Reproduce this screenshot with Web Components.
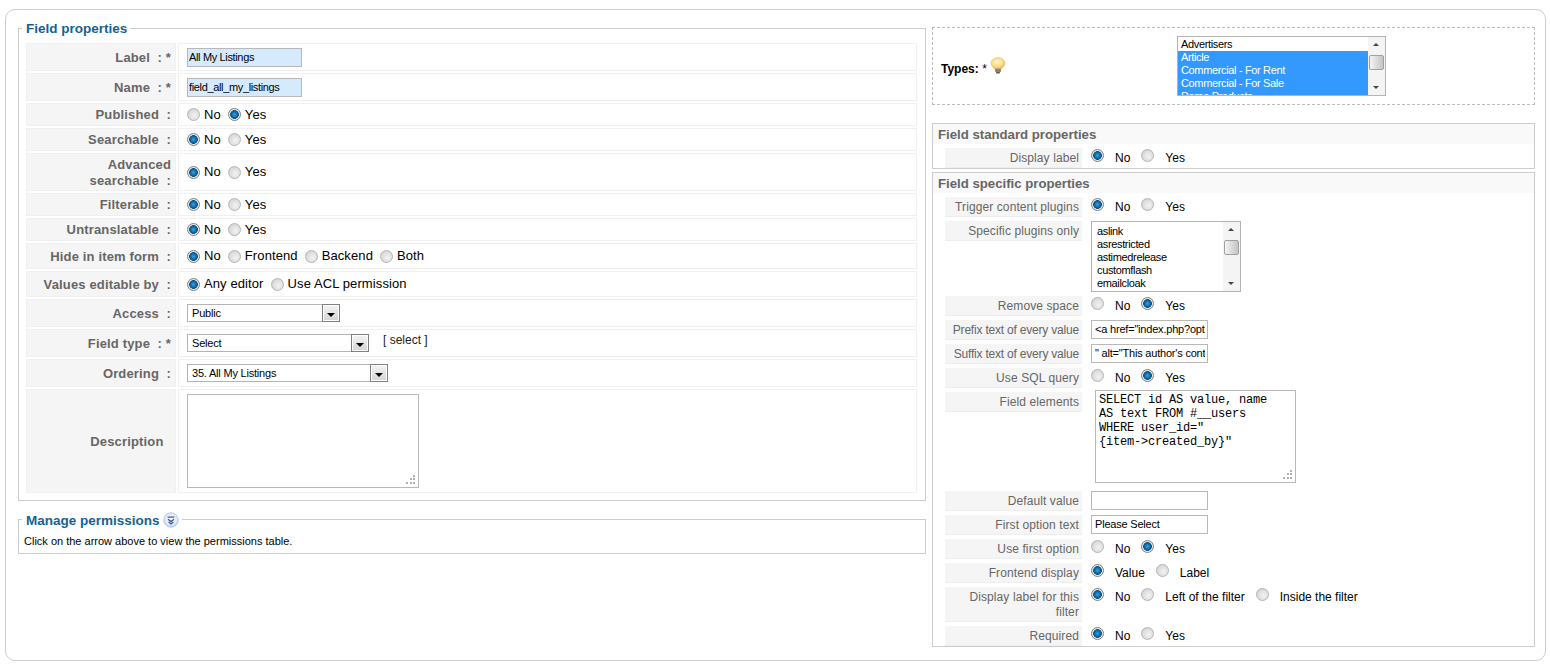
<!DOCTYPE html>
<html>
<head>
<meta charset="utf-8">
<title>Field properties</title>
<style>
    html, body { margin: 0; background: #fff; }
    body { font-family: "Liberation Sans", Arial, sans-serif; color: #000; }
</style>
</head>
<body>
<admin-panel>
    <div slot="left">
        <field-set legend="Field properties">
            <form-table>
                <field-row label="Label  : *" style="--h:28px"><text-box value="All My Listings" width="115" tint></text-box></field-row>
                <field-row label="Name  : *" style="--h:28px"><text-box value="field_all_my_listings" width="115" tint></text-box></field-row>
                <field-row label="Published  :" style="--h:23px"><radio-set options="No,Yes" checked="1"></radio-set></field-row>
                <field-row label="Searchable  :" style="--h:23px"><radio-set options="No,Yes" checked="0"></radio-set></field-row>
                <field-row label="Advanced&#10;searchable  :" style="--h:38px"><radio-set options="No,Yes" checked="0"></radio-set></field-row>
                <field-row label="Filterable  :" style="--h:23px"><radio-set options="No,Yes" checked="0"></radio-set></field-row>
                <field-row label="Untranslatable  :" style="--h:23px"><radio-set options="No,Yes" checked="0"></radio-set></field-row>
                <field-row label="Hide in item form  :" style="--h:26px"><radio-set options="No,Frontend,Backend,Both" checked="0"></radio-set></field-row>
                <field-row label="Values editable by  :" style="--h:26px"><radio-set options="Any editor,Use ACL permission" checked="0"></radio-set></field-row>
                <field-row label="Access  :" style="--h:28px"><drop-select value="Public" width="153"></drop-select></field-row>
                <field-row label="Field type  : *" style="--h:28px"><drop-select value="Select" width="182"></drop-select><span class="type-note">[ select ]</span></field-row>
                <field-row label="Ordering  :" style="--h:28px"><drop-select value="35. All My Listings" width="201"></drop-select></field-row>
                <field-row label="Description  " style="--h:104px"><text-area width="232" height="94"></text-area></field-row>
            </form-table>
        </field-set>
        <field-set legend="Manage permissions" collapsible class="perm">
            <perm-note>Click on the arrow above to view the permissions table.</perm-note>
        </field-set>
    </div>
    <div slot="right">
        <types-box>
            <list-box width="209" height="60" pad="3" top="1">
                <list-opt>Advertisers</list-opt>
                <list-opt selected>Article</list-opt>
                <list-opt selected>Commercial - For Rent</list-opt>
                <list-opt selected>Commercial - For Sale</list-opt>
                <list-opt selected>Demo Products</list-opt>
            </list-box>
        </types-box>
        <prop-box title="Field standard properties" class="std">
            <prop-row label="Display label"><radio-set small options="No,Yes" checked="0"></radio-set></prop-row>
        </prop-box>
        <prop-box title="Field specific properties">
            <prop-row label="Trigger content plugins"><radio-set small options="No,Yes" checked="0"></radio-set></prop-row>
            <prop-row label="Specific plugins only">
                <list-box width="150" height="71" pad="5" top="3">
                    <list-opt>aslink</list-opt>
                    <list-opt>asrestricted</list-opt>
                    <list-opt>astimedrelease</list-opt>
                    <list-opt>customflash</list-opt>
                    <list-opt>emailcloak</list-opt>
                </list-box>
            </prop-row>
            <prop-row label="Remove space"><radio-set small options="No,Yes" checked="1"></radio-set></prop-row>
            <prop-row label="Prefix text of every value" tight><text-box value="&lt;a href=&quot;index.php?option=com_flexicontent" width="117"></text-box></prop-row>
            <prop-row label="Suffix text of every value" tight><text-box value="&quot; alt=&quot;This author's content&quot;" width="117"></text-box></prop-row>
            <prop-row label="Use SQL query"><radio-set small options="No,Yes" checked="1"></radio-set></prop-row>
            <prop-row label="Field elements" flush>
                <text-area width="201" height="93" mono>SELECT id AS value, name
AS text FROM #__users
WHERE user_id="
{item-&gt;created_by}"</text-area>
            </prop-row>
            <prop-row label="Default value"><text-box value="" width="117"></text-box></prop-row>
            <prop-row label="First option text"><text-box value="Please Select" width="117"></text-box></prop-row>
            <prop-row label="Use first option"><radio-set small options="No,Yes" checked="1"></radio-set></prop-row>
            <prop-row label="Frontend display"><radio-set small options="Value,Label" checked="0"></radio-set></prop-row>
            <prop-row label="Display label for this&#10;filter"><radio-set small options="No,Left of the filter,Inside the filter" checked="0"></radio-set></prop-row>
            <prop-row label="Required"><radio-set small options="No,Yes" checked="0"></radio-set></prop-row>
        </prop-box>
    </div>
</admin-panel>

<script>
(function(){
    // Small helper, every element here has the same open shadow + style setup
    function shadow(el, html){
        el.attachShadow({mode: 'open'});
        el.shadowRoot.innerHTML = html;
    }

    function esc(str){
        return String(str).replace(/&/g, '&amp;').replace(/</g, '&lt;').replace(/"/g, '&quot;');
    }

    class AdminPanel extends HTMLElement {
        connectedCallback(){
            shadow(this, `
                <style>
                    :host { display: block; margin: 9px 4px 0 5px; }
                    .wrap {
                        display: grid;
                        grid-template-columns: 908px 603px;
                        column-gap: 6px;
                        align-items: start;
                        box-sizing: border-box;
                        height: 652px;
                        padding: 10px 0 0 12px;
                        border: 1px solid #ccc;
                        border-radius: 10px;
                    }
                    .right { padding-top: 7px; }
                </style>
                <div class="wrap">
                    <div class="left"><slot name="left"></slot></div>
                    <div class="right"><slot name="right"></slot></div>
                </div>
            `);
        }
    }

    class FieldSet extends HTMLElement {
        connectedCallback(){
            const icon = this.hasAttribute('collapsible') ? `
                <svg width="16" height="16" viewBox="0 0 16 16">
                    <defs><radialGradient id="g" cx="50%" cy="45%" r="55%">
                        <stop offset="0" stop-color="#fafcff"/><stop offset="0.7" stop-color="#e3ebf8"/><stop offset="1" stop-color="#b9c8e6"/>
                    </radialGradient></defs>
                    <circle cx="8" cy="8" r="7.2" fill="url(#g)" stroke="#b4c4e2" stroke-width="0.9"/>
                    <path d="M4.6 5.2h6.800M5 7.200l3 2.400 3-2.400M5.600 10l2.400 2 2.400-2" fill="none" stroke="#3a5f9e" stroke-width="1.300"/>
                </svg>` : '';
            const perm = this.classList.contains('perm');
            shadow(this, `
                <style>
                    :host { display: block; margin-top: ${perm ? '10px' : '0'}; }
                    fieldset {
                        margin: 0;
                        padding: ${perm ? '6px 5px 5px 5px' : '7px 7px 7px 7px'};
                        border: 1px solid #ccc;
                        min-width: 0;
                    }
                    legend {
                        display: flex;
                        align-items: center;
                        gap: 3px;
                        margin-left: ${perm ? '-2px' : '-4px'};
                        padding: 1px 3px 0 4px;
                        font: bold 13.5px/15px "Liberation Sans", Arial, sans-serif;
                        color: #146295;
                    }
                </style>
                <fieldset>
                    <legend>${esc(this.getAttribute('legend'))}${icon}</legend>
                    <slot></slot>
                </fieldset>
            `);
        }
    }

    class FormTable extends HTMLElement {
        connectedCallback(){
            shadow(this, `
                <style>
                    :host { display: flex; flex-direction: column; gap: 2px; }
                </style>
                <slot></slot>
            `);
        }
    }

    class FieldRow extends HTMLElement {
        connectedCallback(){
            shadow(this, `
                <style>
                    :host {
                        display: grid;
                        grid-template-columns: 150px 739px;
                        column-gap: 2px;
                        height: var(--h, 24px);
                    }
                    .label {
                        display: flex;
                        align-items: center;
                        justify-content: flex-end;
                        box-sizing: border-box;
                        padding: 1px 4px 0 0;
                        background: #f5f5f5;
                        border: 1px solid #f0f0f0;
                        font: bold 13px/16px "Liberation Sans", Arial, sans-serif;
                        letter-spacing: 0.15px;
                        color: #666;
                        text-align: right;
                        white-space: pre;
                    }
                    .value {
                        display: flex;
                        align-items: center;
                        box-sizing: border-box;
                        padding-left: 8px;
                        border: 1px solid #f0f0f0;
                    }
                    ::slotted(.type-note) {
                        align-self: flex-start;
                        margin: 2px 0 0 14px;
                        font: 12px/16px "Liberation Sans", Arial, sans-serif;
                        color: #222;
                    }
                </style>
                <div class="label">${esc(this.getAttribute('label'))}</div>
                <div class="value"><slot></slot></div>
            `);
        }
    }

    class RadioSet extends HTMLElement {
        connectedCallback(){
            const small = this.hasAttribute('small');
            const checked = Number(this.getAttribute('checked'));
            const items = this.getAttribute('options').split(',').map((opt, i) => `
                <span class="item"><radio-dot ${i === checked ? 'on' : ''}></radio-dot><span class="txt">${esc(opt)}</span></span>
            `).join('');
            shadow(this, `
                <style>
                    :host {
                        display: flex;
                        align-items: ${small ? 'flex-start' : 'center'};
                        gap: ${small ? '11px' : '7px'};
                        font: ${small ? '12px/20px' : '13px/16px'} "Liberation Sans", Arial, sans-serif;
                        letter-spacing: ${small ? '0' : '0.1px'};
                        color: #000;
                    }
                    .item { display: flex; align-items: ${small ? 'flex-start' : 'center'}; gap: ${small ? '11px' : '4px'}; }
                    radio-dot { margin-top: ${small ? '1px' : '0'}; }
                </style>
                ${items}
            `);
        }
    }

    class RadioDot extends HTMLElement {
        connectedCallback(){
            shadow(this, `
                <style>
                    :host {
                        display: block;
                        box-sizing: border-box;
                        width: 13px;
                        height: 13px;
                        flex: none;
                        border-radius: 50%;
                        border: 1px solid #b4b4b4;
                        background: radial-gradient(circle at 60% 60%, #f2f2f2 0, #dedede 55%, #c8c8c8 100%);
                    }
                    :host([on]) {
                        border-color: #808080;
                        background: radial-gradient(circle at 50% 50%, #3aa4dc 0, #0d6aa8 36%, #0a4f80 52%, #eeeeee 60%, #d4d4d4 100%);
                    }
                </style>
            `);
        }
    }

    class TextBox extends HTMLElement {
        connectedCallback(){
            const tint = this.hasAttribute('tint');
            shadow(this, `
                <style>
                    :host {
                        display: block;
                        box-sizing: border-box;
                        width: ${this.getAttribute('width')}px;
                        height: 19px;
                        padding: 0 2px 0 ${tint ? '1px' : '3px'};
                        border: 1px solid #b8b8b8;
                        background: ${tint ? '#d5eaff' : '#fff'};
                        font: 11px/17px "Liberation Sans", Arial, sans-serif;
                        letter-spacing: ${tint ? '-0.35px' : '-0.2px'};
                        color: #000;
                    }
                    .clip { height: 17px; overflow: hidden; white-space: nowrap; }
                </style>
                <div class="clip">${esc(this.getAttribute('value'))}</div>
            `);
        }
    }

    class DropSelect extends HTMLElement {
        connectedCallback(){
            shadow(this, `
                <style>
                    :host {
                        display: flex;
                        justify-content: space-between;
                        box-sizing: border-box;
                        width: ${this.getAttribute('width')}px;
                        height: 18px;
                        border: 1px solid #b4b4b4;
                        font: 11px/16px "Liberation Sans", Arial, sans-serif;
                        letter-spacing: -0.2px;
                        color: #000;
                    }
                    .txt { padding-left: 4px; white-space: nowrap; }
                    .btn {
                        position: relative;
                        box-sizing: border-box;
                        width: 18px;
                        height: 18px;
                        margin: -1px -1px -1px 0;
                        border: 1px solid #808080;
                        box-shadow: inset 0 0 0 1px #fff;
                        background: linear-gradient(#f4f4f4, #d4d4d4);
                    }
                    .btn::after {
                        content: "";
                        position: absolute;
                        left: 4px;
                        top: 8px;
                        border: 4px solid transparent;
                        border-top: 4px solid #000;
                        border-bottom: 0;
                    }
                </style>
                <span class="txt">${esc(this.getAttribute('value'))}</span>
                <span class="btn"></span>
            `);
        }
    }

    class TextArea extends HTMLElement {
        connectedCallback(){
            shadow(this, `
                <style>
                    :host {
                        display: block;
                        position: relative;
                        box-sizing: border-box;
                        width: ${this.getAttribute('width')}px;
                        height: ${this.getAttribute('height')}px;
                        padding: 2px 3px;
                        border: 1px solid #b8b8b8;
                        font: 12px/14px "Liberation Mono", "Courier New", monospace;
                        letter-spacing: -0.2px;
                        color: #000;
                    }
                    .txt { white-space: pre; }
                    svg { position: absolute; right: 2px; bottom: 2px; }
                </style>
                <div class="txt"><slot></slot></div>
                <svg width="11" height="11" viewBox="0 0 11 11" fill="#b0b0b0">
                    <rect x="8" y="1" width="2" height="2"/>
                    <rect x="5" y="4" width="2" height="2"/><rect x="8" y="4" width="2" height="2"/>
                    <rect x="1" y="8" width="2" height="2"/><rect x="5" y="8" width="2" height="2"/><rect x="8" y="8" width="2" height="2"/>
                </svg>
            `);
        }
    }

    class ListBox extends HTMLElement {
        connectedCallback(){
            shadow(this, `
                <style>
                    :host {
                        display: flex;
                        box-sizing: border-box;
                        width: ${this.getAttribute('width')}px;
                        height: ${this.getAttribute('height')}px;
                        overflow: hidden;
                        border: 1px solid #b4b4b4;
                        --opt-pad: ${this.getAttribute('pad')}px;
                        flex: none;
                    }
                    .opts { flex: 1; min-width: 0; overflow: hidden; padding-top: ${this.getAttribute('top')}px; }
                    .bar {
                        position: relative;
                        flex: none;
                        width: 17px;
                        background: #f4f4f4;
                    }
                    .up, .down {
                        position: absolute;
                        left: 5px;
                        border: 3.5px solid transparent;
                    }
                    .up { top: 6px; border-bottom-color: #444; border-top: 0; }
                    .down { bottom: 6px; border-top-color: #444; border-bottom: 0; }
                    .thumb {
                        position: absolute;
                        left: 1px;
                        top: 18px;
                        box-sizing: border-box;
                        width: 15px;
                        height: 15px;
                        border: 1px solid #a0a0a0;
                        border-radius: 2px;
                        background: linear-gradient(90deg, #f4f4f4, #c4c4c4);
                    }
                </style>
                <div class="opts"><slot></slot></div>
                <div class="bar"><span class="up"></span><span class="thumb"></span><span class="down"></span></div>
            `);
        }
    }

    class ListOpt extends HTMLElement {
        connectedCallback(){
            shadow(this, `
                <style>
                    :host {
                        display: block;
                        height: 13px;
                        padding-left: var(--opt-pad, 3px);
                        font: 11px/13px "Liberation Sans", Arial, sans-serif;
                        letter-spacing: -0.35px;
                        color: #000;
                        white-space: nowrap;
                    }
                    :host([selected]) { background: #3399ff; color: #fff; }
                </style>
                <slot></slot>
            `);
        }
    }

    class TypesBox extends HTMLElement {
        connectedCallback(){
            shadow(this, `
                <style>
                    :host {
                        display: grid;
                        grid-template-columns: 236px auto;
                        align-items: center;
                        box-sizing: border-box;
                        height: 78px;
                        padding: 0 8px;
                        border: 1px dashed #bbb;
                    }
                    .types {
                        display: flex;
                        align-items: center;
                        font: bold 12px/16px "Liberation Sans", Arial, sans-serif;
                        white-space: pre;
                    }
                    .txt { margin-top: 6px; }
                    .star { font-weight: normal; }
                    svg { margin: -1px 0 0 3px; }
                </style>
                <div class="types"><span class="txt">Types: <span class="star">*</span></span>
                    <svg width="16" height="17" viewBox="0 0 16 17">
                        <defs><radialGradient id="b" cx="45%" cy="40%" r="60%">
                            <stop offset="0" stop-color="#fff8d8"/><stop offset="0.6" stop-color="#ffdf8a"/><stop offset="1" stop-color="#f2b04a"/>
                        </radialGradient></defs>
                        <path d="M8 .8C4 .8 1 3.300 1 6.300c0 2.500 2.400 3.500 3.500 5.700h7C12.600 9.800 15 8.800 15 6.300 15 3.300 12 .8 8 .8z" fill="url(#b)" stroke="#eec27a" stroke-width="0.8"/>
                        <rect x="5" y="11.800" width="6" height="3.200" rx="0.800" fill="#85857e"/>
                        <rect x="6.200" y="15" width="3.600" height="1.500" fill="#555"/>
                    </svg>
                </div>
                <slot></slot>
            `);
        }
    }

    class PropBox extends HTMLElement {
        connectedCallback(){
            const std = this.classList.contains('std');
            shadow(this, `
                <style>
                    :host {
                        display: block;
                        box-sizing: border-box;
                        margin-top: ${std ? '18px' : '3px'};
                        border: 1px solid #ccc;
                    }
                    .head {
                        height: 20px;
                        padding-left: 5px;
                        background: #f9f9f9;
                        font: bold 13.2px/21px "Liberation Sans", Arial, sans-serif;
                        color: #666;
                    }
                    .rows { display: flex; flex-direction: column; gap: 4px; padding-top: 4px; }
                </style>
                <div class="head">${esc(this.getAttribute('title'))}</div>
                <div class="rows"><slot></slot></div>
            `);
        }
    }

    class PropRow extends HTMLElement {
        connectedCallback(){
            const flush = this.hasAttribute('flush');
            shadow(this, `
                <style>
                    :host {
                        display: grid;
                        grid-template-columns: 137px 1fr;
                        align-items: start;
                        margin-left: 12px;
                    }
                    .label {
                        box-sizing: border-box;
                        min-height: 20px;
                        padding: 3px 3px 1px 0;
                        background: #f5f5f5;
                        border-bottom: 1px solid #eee;
                        font: 12px/15px "Liberation Sans", Arial, sans-serif;
                        letter-spacing: ${this.hasAttribute('tight') ? '-0.2px' : '0.1px'};
                        color: #666;
                        text-align: right;
                        white-space: pre;
                    }
                    .value { padding-left: ${flush ? '13px' : '9px'}; margin-top: ${flush ? '-2px' : '0'}; margin-bottom: ${flush ? '4px' : '0'}; }
                </style>
                <div class="label">${esc(this.getAttribute('label'))}</div>
                <div class="value"><slot></slot></div>
            `);
        }
    }

    class PermNote extends HTMLElement {
        connectedCallback(){
            shadow(this, `
                <style>
                    :host {
                        display: block;
                        font: 11px/14px "Liberation Sans", Arial, sans-serif;
                        color: #000;
                    }
                </style>
                <slot></slot>
            `);
        }
    }

    customElements.define('admin-panel', AdminPanel);
    customElements.define('field-set', FieldSet);
    customElements.define('form-table', FormTable);
    customElements.define('field-row', FieldRow);
    customElements.define('radio-set', RadioSet);
    customElements.define('radio-dot', RadioDot);
    customElements.define('text-box', TextBox);
    customElements.define('drop-select', DropSelect);
    customElements.define('text-area', TextArea);
    customElements.define('list-box', ListBox);
    customElements.define('list-opt', ListOpt);
    customElements.define('types-box', TypesBox);
    customElements.define('prop-box', PropBox);
    customElements.define('prop-row', PropRow);
    customElements.define('perm-note', PermNote);
})();
</script>
</body>
</html>
